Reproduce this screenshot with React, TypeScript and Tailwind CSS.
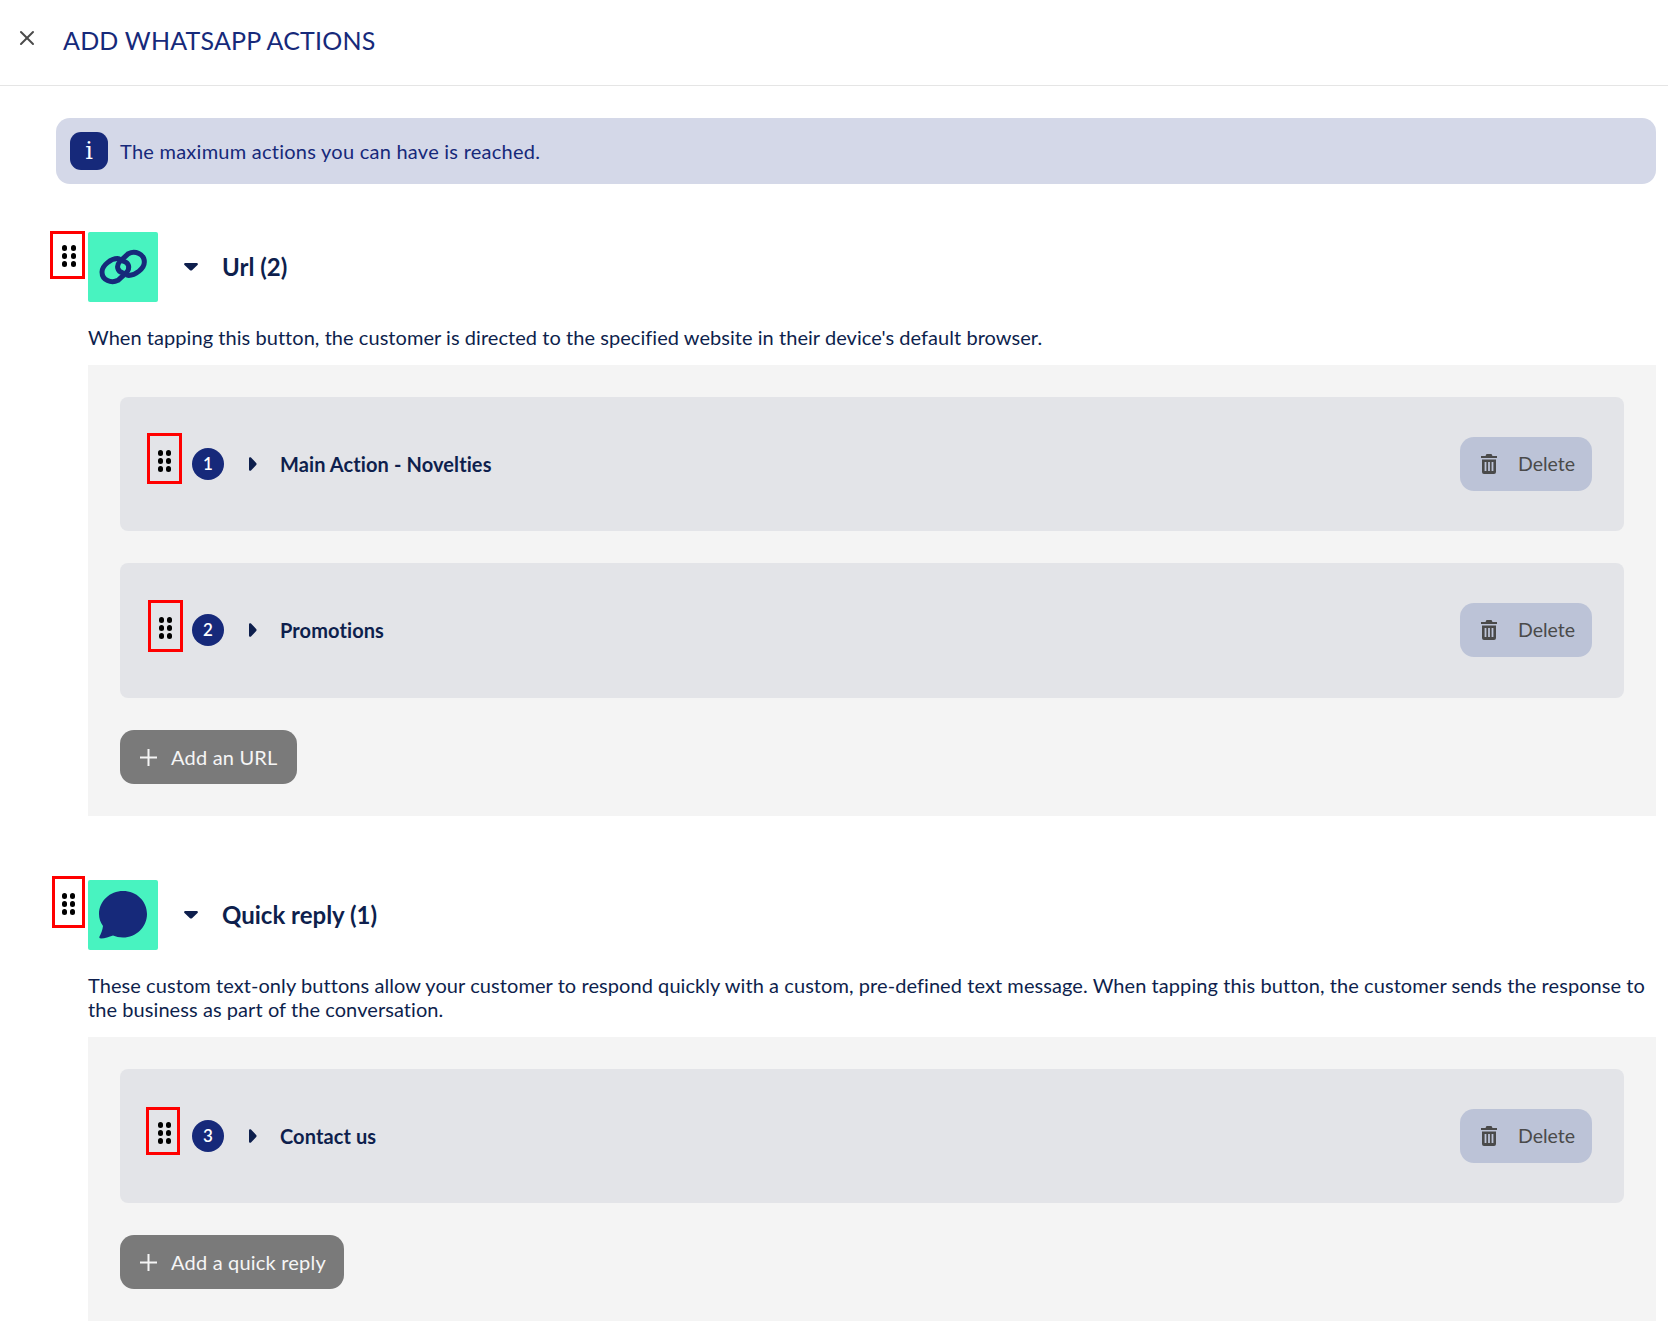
import { X } from 'lucide-react';

const font = 'font-["Lato","Noto_Sans",sans-serif]';

function Handle({ className }: { className: string }) {
  return (
    <div className={`flex flex-none items-center justify-center self-start border-[3px] border-[#ff0000] ${className}`}>
      <div className="grid grid-cols-2 gap-x-[3.2px] gap-y-[2.5px]">
        {[0, 1, 2, 3, 4, 5].map((i) => (
          <span key={i} className="h-[5.4px] w-[5.4px] rounded-full bg-black" />
        ))}
      </div>
    </div>
  );
}

function CaretDown() {
  return (
    <svg width="14" height="8" viewBox="0 0 14 8" className="flex-none">
      <path d="M1.500 0h11c1.200 0 1.800 1.200 1 2L8 7.200c-.5.500-1.500.500-2 0L.5 2C-.3 1.200.3 0 1.500 0z" fill="#0e1f4d" />
    </svg>
  );
}

function CaretRight() {
  return (
    <svg width="8" height="14" viewBox="0 0 8 14" className="flex-none">
      <path d="M0 1.500v11c0 1.200 1.200 1.800 2 1L7.200 8c.5-.5.5-1.500 0-2L2 .5C1.200-.3 0 .3 0 1.500z" fill="#0e1f4d" />
    </svg>
  );
}

function TrashIcon() {
  return (
    <svg width="16" height="20" viewBox="0 0 16 20" className="flex-none" fill="#4a4a4a">
      <path d="M5.500 0h5l1 2H16v2H0V2h4.500z" />
      <path fillRule="evenodd" d="M1 5.500h14V18a2 2 0 0 1-2 2H3a2 2 0 0 1-2-2zM3.600 8v9h1.800V8zm3.500 0v9h1.800V8zm3.500 0v9h1.800V8z" />
    </svg>
  );
}

function PlusIcon() {
  return (
    <svg width="17" height="17" viewBox="0 0 17 17" className="flex-none" stroke="#f5f5f5" strokeWidth="2">
      <path d="M8.500 0v17M0 8.500h17" />
    </svg>
  );
}

function LinkLogo() {
  return (
    <div className="h-[70px] w-[70px] flex-none rounded-[2px] bg-[#48f3c0]">
      <svg width="70" height="70" viewBox="0 0 210 210" fill="none" stroke="#16297a" strokeWidth="15" strokeLinecap="round">
        <path d="M92 80C70 78 42 100 42 120C42 145 70 155 90 145L115 122C128 108 122 92 108 88" />
        <path d="M119 130C141 132 169 110 169 90C169 65 141 55 121 65L96 88C83 102 89 118 103 122" />
      </svg>
    </div>
  );
}

function ChatLogo() {
  return (
    <div className="h-[70px] w-[70px] flex-none rounded-[2px] bg-[#48f3c0]">
      <svg width="70" height="70" viewBox="0 0 70 70">
        <path
          d="M35 11C48.500 11 59 21 59 34C59 47 48 57.500 35 57.500C31 57.500 28 56.500 25 55.500C21 57 17 58.500 13 58.500C11.500 58.500 11 57.500 11.500 56.500C13 53.500 14.500 50 15 46C12.500 42.500 11 38.500 11 34C11 21 22 11 35 11Z"
          fill="#16297a"
        />
      </svg>
    </div>
  );
}

function ActionCard({ index, title, handle, height }: { index: number; title: string; handle: string; height: string }) {
  return (
    <div className={`flex items-start justify-between rounded-[8px] bg-[#e3e4e8] pl-[27px] pr-[32px] pt-[40px] ${height}`}>
      <div className="flex h-[54px] items-center">
        <Handle className={handle} />
        <div className="ml-[10px] flex h-[32px] w-[32px] flex-none items-center justify-center rounded-full bg-[#16297a] text-[17px] font-semibold text-white">
          {index}
        </div>
        <div className="ml-[25px]">
          <CaretRight />
        </div>
        <span className="ml-[23px] text-[20px] font-bold tracking-[0.1px] text-[#0e1f4d]">{title}</span>
      </div>
      <button className="flex h-[54px] w-[132px] items-center rounded-[14px] bg-[#bcc3d7] pl-[21px] text-[19.500px] text-[#4a4a4a]">
        <TrashIcon />
        <span className="ml-[21px]">Delete</span>
      </button>
    </div>
  );
}

function AddButton({ label, width }: { label: string; width: string }) {
  return (
    <button className={`flex h-[54px] items-center rounded-[14px] bg-[#7a7a7a] pl-[20px] text-[20px] tracking-[0.2px] text-[#f5f5f5] ${width}`}>
      <PlusIcon />
      <span className="ml-[14px]">{label}</span>
    </button>
  );
}

export default function App() {
  return (
    <div className={`min-h-[1338px] bg-white ${font}`}>
      {/* Header */}
      <div className="flex h-[86px] items-start border-b border-[#e5e5e5] pl-[15px]">
        <X className="mt-[26px] h-[24px] w-[24px] text-[#4a4a4a]" strokeWidth={2} />
        <h1 className="ml-[24px] mt-[22px] text-[25px] tracking-[0.2px] text-[#16297a]">ADD WHATSAPP ACTIONS</h1>
      </div>

      <div className="pl-[50px] pr-[12px]">
        {/* Info banner */}
        <div className="ml-[6px] mt-[32px] flex h-[66px] items-center rounded-[14px] bg-[#d4d8e8] pl-[14px]">
          <div className="flex h-[38px] w-[38px] flex-none items-center justify-center rounded-[11px] bg-[#16297a] font-['DejaVu_Serif',serif] text-[24px] text-white">
            i
          </div>
          <span className="ml-[12px] text-[20px] tracking-[0.25px] text-[#16297a]">The maximum actions you can have is reached.</span>
        </div>

        {/* Url section */}
        <div className="mt-[47px] flex items-start">
          <Handle className="h-[48px] w-[35px] pl-[3px] pt-[2px]" />
          <div className="ml-[3px] mt-px">
            <LinkLogo />
          </div>
          <div className="mt-px flex h-[70px] items-center">
            <div className="ml-[26px]">
              <CaretDown />
            </div>
            <h2 className="ml-[24px] text-[24px] font-bold text-[#0e1f4d]">Url (2)</h2>
          </div>
        </div>
        <p className="ml-[38px] mt-[23px] text-[20px] leading-[24px] tracking-[0.05px] text-[#0e1f4d]">
          When tapping this button, the customer is directed to the specified website in their device's default browser.
        </p>
        <div className="ml-[38px] mt-[16px] flex flex-col gap-[32px] bg-[#f4f4f4] p-[32px]">
          <ActionCard index={1} title="Main Action - Novelties" height="h-[134px]" handle="-mt-[4px] h-[51px] w-[35px] pt-[5px]" />
          <ActionCard index={2} title="Promotions" height="h-[135px]" handle="-mt-[3px] -mr-px ml-px h-[52px] w-[35px] pt-[4px]" />
          <AddButton label="Add an URL" width="w-[177px]" />
        </div>

        {/* Quick reply section */}
        <div className="mt-[60px] ml-[2px] flex items-start">
          <Handle className="h-[52px] w-[33px] pt-[4px]" />
          <div className="ml-[3px] mt-[4px]">
            <ChatLogo />
          </div>
          <div className="mt-[4px] flex h-[70px] items-center">
            <div className="ml-[26px]">
              <CaretDown />
            </div>
            <h2 className="ml-[24px] text-[24px] font-bold text-[#0e1f4d]">Quick reply (1)</h2>
          </div>
        </div>
        <p className="ml-[38px] mt-[23px] text-[20px] leading-[24px] tracking-[0.07px] text-[#0e1f4d]">
          These custom text-only buttons allow your customer to respond quickly with a custom, pre-defined text message. When tapping this button, the customer sends the response to the business as part of the conversation.
        </p>
        <div className="ml-[38px] mt-[16px] flex flex-col gap-[32px] bg-[#f4f4f4] p-[32px]">
          <ActionCard index={3} title="Contact us" height="h-[134px]" handle="-mt-[2px] -ml-px mr-[2px] h-[48px] w-[34px] pl-[3px] pt-[4px]" />
          <AddButton label="Add a quick reply" width="w-[224px]" />
        </div>
      </div>
    </div>
  );
}
